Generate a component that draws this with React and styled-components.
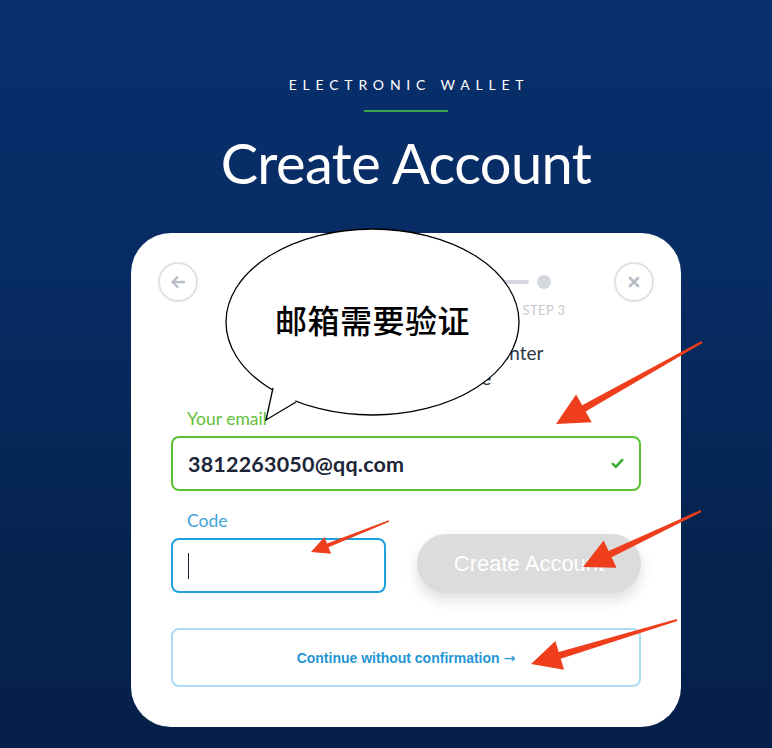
import React from "react";
import styled, { createGlobalStyle } from "styled-components";

const GlobalStyle = createGlobalStyle`
  html, body { margin: 0; padding: 0; }
  body {
    font-family: "Lato", "Noto Sans", sans-serif;
    background: #05214a;
  }
  * { box-sizing: border-box; }
`;

const Page = styled.div`
  position: relative;
  width: 772px;
  height: 748px;
  overflow: hidden;
  background: linear-gradient(180deg, #09306e 0%, #072b62 40%, #05234f 75%, #05204a 100%);
  display: flex;
  flex-direction: column;
  align-items: center;
  padding: 75px 0 0 40px;
`;

const Eyebrow = styled.div`
  color: #ffffff;
  font-size: 14px;
  line-height: 20px;
  letter-spacing: 5.8px;
  padding-left: 6px;
  font-weight: 400;
`;

const GreenRule = styled.div`
  width: 84px;
  height: 2px;
  background: #3aa548;
  margin-top: 15px;
`;

const Title = styled.h1`
  margin: 20px 0 0;
  color: #ffffff;
  font-weight: 400;
  font-size: 56px;
  line-height: 62px;
  letter-spacing: -0.6px;
`;

const Card = styled.div`
  width: 550px;
  height: 494px;
  margin-top: 39px;
  background: #ffffff;
  border-radius: 40px;
  padding: 29px 27px 40px;
  display: flex;
  flex-direction: column;
`;

const TopRow = styled.div`
  display: flex;
  justify-content: space-between;
  align-items: flex-start;
`;

const RoundButton = styled.button`
  width: 40px;
  height: 40px;
  border-radius: 50%;
  border: 2px solid #dfe2e7;
  background: #fff;
  display: flex;
  align-items: center;
  justify-content: center;
  padding: 0;
  color: #b8bec8;
`;

const Steps = styled.div`
  display: flex;
  flex-direction: column;
  align-items: center;
`;

const StepTrack = styled.div`
  height: 40px;
  display: flex;
  align-items: center;
`;

const Dot = styled.div`
  width: 14px;
  height: 14px;
  border-radius: 50%;
  background: #d5d9df;
`;

const Bar = styled.div`
  width: 108px;
  height: 4px;
  border-radius: 2px;
  background: #d5d9df;
  margin: 0 8px;
`;

const StepLabels = styled.div`
  display: flex;
  justify-content: space-between;
  width: 324px;
  margin-top: 1px;
`;

const StepLabel = styled.span`
  width: 48px;
  text-align: center;
  font-size: 13px;
  line-height: 14px;
  letter-spacing: 0.4px;
  color: #c5c9cf;
`;

const Description = styled.p`
  margin: 23px 0 0;
  text-align: center;
  font-size: 19px;
  line-height: 25px;
  color: #2f3846;
`;

const Form = styled.div`
  margin: 0 13px;
  display: flex;
  flex-direction: column;
`;

const Label = styled.label`
  display: block;
  margin: ${(p) => p.$mt}px 0 0 16px;
  font-size: 17.5px;
  line-height: 20px;
  color: ${(p) => p.$color};
`;

const Field = styled.div`
  position: relative;
  margin-top: ${(p) => p.$mt || 0}px;
  width: ${(p) => p.$w || "100%"};
  height: 55px;
  border: 2px solid ${(p) => p.$border};
  border-radius: 8px;
  display: flex;
  align-items: center;
  padding: 0 15px;
  flex-shrink: 0;
`;

const FieldText = styled.span`
  flex: 1;
  font-size: 21.5px;
  font-weight: 700;
  color: #1d2538;
  letter-spacing: 0.2px;
`;

const Caret = styled.span`
  width: 1px;
  height: 26px;
  background: #1d2538;
`;

const CodeRow = styled.div`
  display: flex;
  align-items: flex-end;
  justify-content: space-between;
  margin-top: 3px;
`;

const GhostButton = styled.button`
  width: 224px;
  height: 59px;
  border: none;
  border-radius: 30px;
  background: #dcdcdc;
  color: #ffffff;
  font-family: "Liberation Sans", Arial, sans-serif;
  font-size: 22px;
  box-shadow: 0 7px 14px rgba(0, 0, 0, 0.13);
`;

const OutlineButton = styled.button`
  margin-top: 35px;
  width: 100%;
  height: 59px;
  border: 2px solid #acdcf3;
  border-radius: 8px;
  background: #fff;
  color: #1f96d3;
  font-family: "Liberation Sans", Arial, sans-serif;
  font-size: 14px;
  font-weight: 700;
`;

const ArrowGlyph = styled.span`
  font-family: "DejaVu Sans", sans-serif;
  font-weight: 400;
  font-size: 14px;
  margin-left: 4px;
`;

const Overlay = styled.svg`
  position: absolute;
  left: 0;
  top: 0;
  width: 772px;
  height: 748px;
  pointer-events: none;
`;

const BubbleText = styled.div`
  position: absolute;
  left: 226px;
  top: 297px;
  width: 293px;
  text-align: center;
  font-family: "Noto Sans CJK SC", "Noto Sans", sans-serif;
  font-size: 32px;
  line-height: 44px;
  font-weight: 500;
  color: #000;
  letter-spacing: 0.5px;
`;

function arrowPoints(tail, tip, headLen, headW, w0, w1) {
  const dx = tip[0] - tail[0];
  const dy = tip[1] - tail[1];
  const len = Math.hypot(dx, dy);
  const ux = dx / len, uy = dy / len;
  const nx = -uy, ny = ux;
  const bx = tip[0] - ux * headLen, by = tip[1] - uy * headLen;
  const pts = [
    [tail[0] + nx * w0, tail[1] + ny * w0],
    [bx + nx * w1, by + ny * w1],
    [bx + nx * headW / 2, by + ny * headW / 2],
    tip,
    [bx - nx * headW / 2, by - ny * headW / 2],
    [bx - nx * w1, by - ny * w1],
    [tail[0] - nx * w0, tail[1] - ny * w0],
  ];
  return pts.map((p) => `${p[0].toFixed(1)},${p[1].toFixed(1)}`).join(" ");
}

const arrows = [
  { tail: [702, 342], tip: [556, 424], hl: 32, hw: 32, w0: 1, w1: 3.5 },
  { tail: [389, 521], tip: [311, 552], hl: 18, hw: 18, w0: 0.8, w1: 2 },
  { tail: [701, 511], tip: [583, 567], hl: 30, hw: 30, w0: 1, w1: 3.5 },
  { tail: [677, 620], tip: [531, 664], hl: 30, hw: 30, w0: 1, w1: 3.5 },
];

export default function App() {
  return (
    <>
      <GlobalStyle />
      <Page>
        <Eyebrow>ELECTRONIC WALLET</Eyebrow>
        <GreenRule />
        <Title>Create Account</Title>
        <Card>
          <TopRow>
            <RoundButton aria-label="back">
              <svg width="20" height="20" viewBox="0 0 20 20" fill="none" stroke="currentColor" strokeWidth="2.4" strokeLinecap="round" strokeLinejoin="round">
                <path d="M16 10H4.5M9.5 5L4.5 10l5 5" />
              </svg>
            </RoundButton>
            <Steps>
              <StepTrack>
                <Dot />
                <Bar />
                <Dot />
                <Bar />
                <Dot />
              </StepTrack>
              <StepLabels>
                <StepLabel>STEP 1</StepLabel>
                <StepLabel>STEP 2</StepLabel>
                <StepLabel>STEP 3</StepLabel>
              </StepLabels>
            </Steps>
            <RoundButton aria-label="close">
              <svg width="18" height="18" viewBox="0 0 18 18" fill="none" stroke="currentColor" strokeWidth="2.8" strokeLinecap="round">
                <path d="M5 5l8 8M13 5l-8 8" />
              </svg>
            </RoundButton>
          </TopRow>
          <Description>
            We sent you a code, please enter
            <br />
            the verification code
          </Description>
          <Form>
            <Label $mt={19} $color="#62c03a">Your email</Label>
            <Field $mt={7} $border="#5cc132">
              <FieldText>3812263050@qq.com</FieldText>
              <svg width="13" height="11" viewBox="0 0 13 11" fill="none" stroke="#3cb034" strokeWidth="2.6" strokeLinecap="round" strokeLinejoin="round">
                <path d="M1.8 5.8l3 3L11.2 2" />
              </svg>
            </Field>
            <Label $mt={20} $color="#3fa2d8">Code</Label>
            <CodeRow>
              <Field $w="215px" $border="#1ea1e1">
                <Caret />
              </Field>
              <GhostButton>Create Account</GhostButton>
            </CodeRow>
            <OutlineButton>
              Continue without confirmation<ArrowGlyph>→</ArrowGlyph>
            </OutlineButton>
          </Form>
        </Card>
        <Overlay viewBox="0 0 772 748">
          <ellipse cx="372.5" cy="322" rx="146.5" ry="93" fill="#ffffff" stroke="#000" strokeWidth="1.3" />
          <polygon points="273,387 266,420 296,402 292,394 280,386" fill="#ffffff" />
          <polyline points="273,388 266,420 296,402" fill="none" stroke="#000" strokeWidth="1.3" strokeLinejoin="miter" />
          {arrows.map((a, i) => (
            <polygon key={i} points={arrowPoints(a.tail, a.tip, a.hl, a.hw, a.w0, a.w1)} fill="#ef3e1b" />
          ))}
        </Overlay>
        <BubbleText>邮箱需要验证</BubbleText>
      </Page>
    </>
  );
}
